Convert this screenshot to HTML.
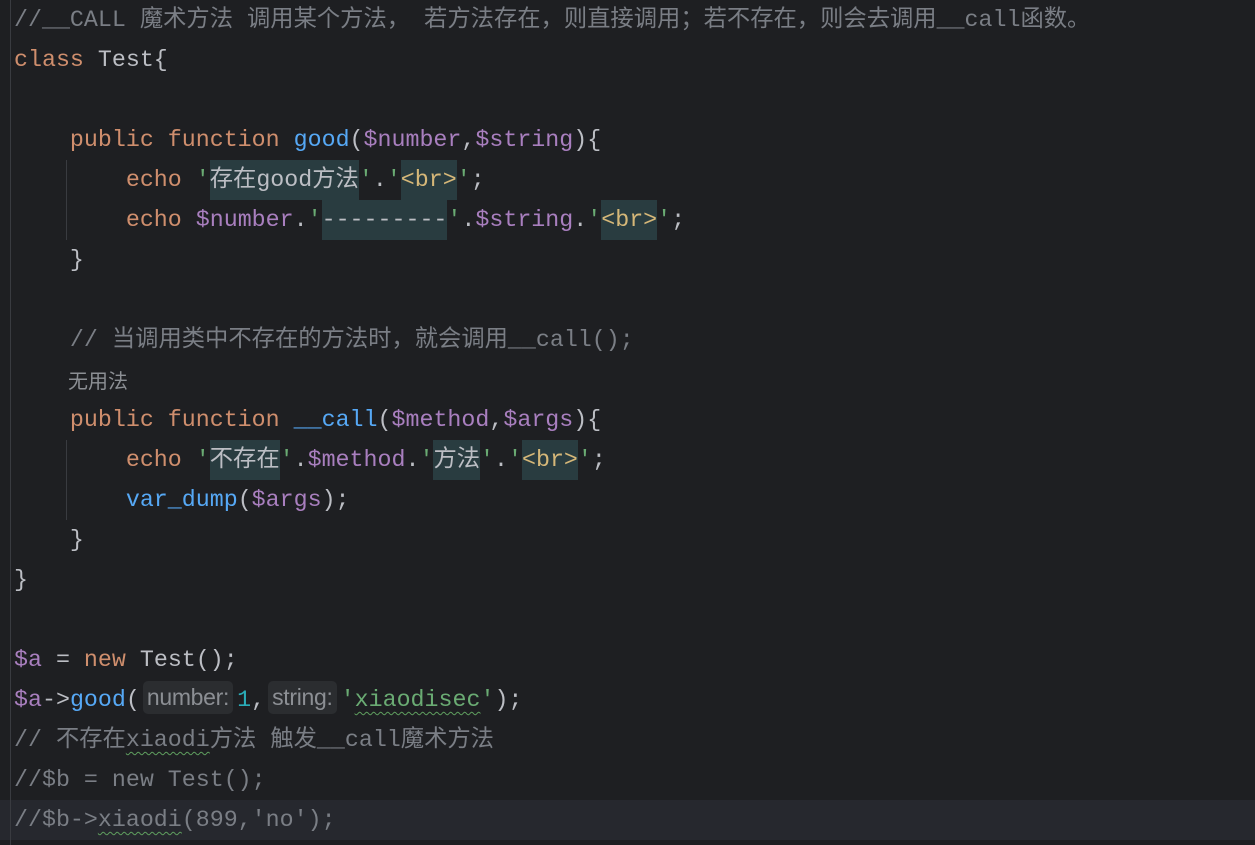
<!DOCTYPE html>
<html><head><meta charset="utf-8"><style>
body{margin:0;width:1255px;height:845px;background:#1e1f22;overflow:hidden;position:relative}
.l{position:absolute;left:14px;height:40px;line-height:40px;white-space:pre;font-family:"Liberation Mono","Noto Sans CJK SC",monospace;font-size:23.3px;color:#bcbec4}
.k{color:#cf8e6d}.f{color:#56a8f5}.v{color:#a97fbf}.c{color:#7a7e85}.s{color:#6aab73}.n{color:#2aacb8}
.h{background:#293c40;display:inline-block;height:40px;vertical-align:top}.t{color:#d5b778}
.hint{display:inline-block;font-family:"Liberation Sans",sans-serif;font-size:23px;color:#8c8f94;background:#2b2d30;border-radius:5px;height:33px;line-height:33px;padding:0 4px;vertical-align:1px;margin:0 4px 0 3px;letter-spacing:-0.3px}
.w{text-decoration:underline wavy #5f9f5f;text-decoration-thickness:1px;text-underline-offset:5px}
.g{position:absolute;width:1px;background:#393b40}
</style></head><body>
<div style="position:absolute;left:0;top:800px;width:1255px;height:40px;background:#26282e"></div>
<div class="g" style="left:10px;top:0;height:845px"></div>
<div class="g" style="left:66px;top:160px;height:80px"></div>
<div class="g" style="left:66px;top:440px;height:80px"></div>
<div class="l c" style="top:0">//__CALL 魔术方法 调用某个方法， 若方法存在，则直接调用；若不存在，则会去调用__call函数。</div>
<div class="l" style="top:40px"><span class="k">class</span> Test{</div>
<div class="l" style="top:120px">    <span class="k">public function</span> <span class="f">good</span>(<span class="v">$number</span>,<span class="v">$string</span>){</div>
<div class="l" style="top:160px">        <span class="k">echo</span> <span class="s">'</span><span class="h">存在good方法</span><span class="s">'</span>.<span class="s">'</span><span class="h t">&lt;br&gt;</span><span class="s">'</span>;</div>
<div class="l" style="top:200px">        <span class="k">echo</span> <span class="v">$number</span>.<span class="s">'</span><span class="h">---------</span><span class="s">'</span>.<span class="v">$string</span>.<span class="s">'</span><span class="h t">&lt;br&gt;</span><span class="s">'</span>;</div>
<div class="l" style="top:240px">    }</div>
<div class="l c" style="top:320px">    // 当调用类中不存在的方法时，就会调用__call();</div>
<div class="l" style="top:362px;left:68px;font-family:'Liberation Sans','Noto Sans CJK SC',sans-serif;font-size:20px;color:#8c8f94">无用法</div>
<div class="l" style="top:400px">    <span class="k">public function</span> <span class="f">__call</span>(<span class="v">$method</span>,<span class="v">$args</span>){</div>
<div class="l" style="top:440px">        <span class="k">echo</span> <span class="s">'</span><span class="h">不存在</span><span class="s">'</span>.<span class="v">$method</span>.<span class="s">'</span><span class="h">方法</span><span class="s">'</span>.<span class="s">'</span><span class="h t">&lt;br&gt;</span><span class="s">'</span>;</div>
<div class="l" style="top:480px">        <span class="f">var_dump</span>(<span class="v">$args</span>);</div>
<div class="l" style="top:520px">    }</div>
<div class="l" style="top:560px">}</div>
<div class="l" style="top:640px"><span class="v">$a</span> = <span class="k">new</span> Test();</div>
<div class="l" style="top:680px"><span class="v">$a</span>-&gt;<span class="f">good</span>(<span class="hint">number:</span><span class="n">1</span>,<span class="hint">string:</span><span class="s">'<span class="w">xiaodisec</span>'</span>);</div>
<div class="l c" style="top:720px">// 不存在<span class="w">xiaodi</span>方法 触发__call魔术方法</div>
<div class="l c" style="top:760px">//$b = new Test();</div>
<div class="l c" style="top:800px">//$b-&gt;<span class="w">xiaodi</span>(899,'no');</div>
</body></html>
